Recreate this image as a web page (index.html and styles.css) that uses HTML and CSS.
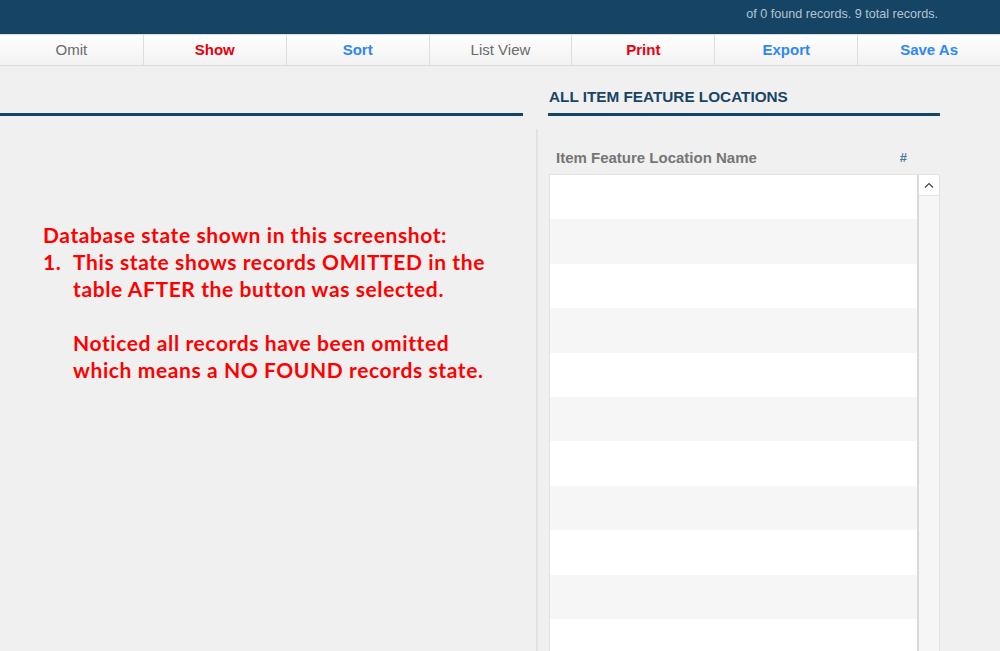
FILE: index.html
```html
<!DOCTYPE html>
<html>
<head>
<meta charset="utf-8">
<link rel="stylesheet" href="styles.css">
</head>
<body>
<header class="topbar"><span class="count">of 0 found records. 9 total records.</span></header>
<nav class="toolbar">
  <div class="tb gray">Omit</div>
  <div class="tb red">Show</div>
  <div class="tb blue">Sort</div>
  <div class="tb gray">List View</div>
  <div class="tb red">Print</div>
  <div class="tb blue">Export</div>
  <div class="tb blue">Save As</div>
</nav>
<main class="main">
  <section class="left">
    <div class="left-head"></div>
    <div class="note">
      <p>Database state shown in this screenshot:</p>
      <div class="item"><span class="num">1.</span><div class="item-text"><p>This state shows records OMITTED in the table AFTER the button was selected.</p><p class="gap">Noticed all records have been omitted which means a NO FOUND records state.</p></div></div>
    </div>
  </section>
  <section class="right">
    <div class="right-head"><h2>ALL ITEM FEATURE LOCATIONS</h2></div>
    <div class="right-body">
      <div class="col-head"><span class="col-name">Item Feature Location Name</span><span class="col-hash">#</span></div>
      <div class="table">
        <div class="rows">
          <div class="row"></div><div class="row alt"></div><div class="row"></div><div class="row alt"></div><div class="row"></div><div class="row alt"></div><div class="row"></div><div class="row alt"></div><div class="row"></div><div class="row alt"></div><div class="row"></div>
        </div>
        <div class="scroll">
          <div class="up"><svg width="10" height="6" viewBox="0 0 10 6"><path d="M1 5.5 L5 1.5 L9 5.5" fill="none" stroke="#444" stroke-width="1.2"/></svg></div>
        </div>
      </div>
    </div>
  </section>
</main>
</body>
</html>
```
FILE: styles.css
```css
* { box-sizing: border-box; }
html, body { margin: 0; padding: 0; }
body {
  width: 1000px;
  height: 651px;
  overflow: hidden;
  background: #f0f0f0;
  font-family: "Liberation Sans", Arial, sans-serif;
}
.topbar {
  height: 34px;
  background: #164464;
  display: flex;
  justify-content: flex-end;
  align-items: center;
  padding: 0 62px 7px 0;
}
.count { color: #b3c4d3; font-size: 12.6px; }
.toolbar {
  display: grid;
  grid-template-columns: repeat(7, 1fr);
  height: 32px;
  border-top: 1px solid #d6dde3;
  border-bottom: 1px solid #dcdcdc;
  background: linear-gradient(#ffffff, #f2f2f2);
}
.tb {
  display: flex;
  align-items: center;
  justify-content: center;
  font-size: 15px;
  border-left: 1px solid #dedede;
  padding-bottom: 1px;
}
.tb:first-child { border-left: none; }
.gray { color: #6a6a6a; }
.red { color: #e8000b; font-weight: bold; }
.blue { color: #2f87f5; font-weight: bold; }
.main { display: flex; }
.left { width: 523px; }
.left-head { height: 50px; border-bottom: 3px solid #164464; }
.note {
  margin-top: 105px;
  padding-left: 43px;
  font-family: Lato, "Open Sans", sans-serif;
  font-weight: bold;
  font-size: 21px;
  line-height: 27px;
  letter-spacing: 0.6px;
  color: #ff0000;
}
.note p { margin: 0; }
.item { display: flex; }
.num { width: 30px; flex: none; }
.item-text { width: 420px; }
.note .gap { margin-top: 27px; }
.right { margin-left: 13px; width: 404px; }
.right-head {
  height: 50px;
  margin-left: 12px;
  border-bottom: 3px solid #164464;
  display: flex;
  align-items: center;
  padding-top: 14px;
}
.right-head h2 {
  margin: 0 0 0 1px;
  font-size: 15.3px;
  font-weight: bold;
  color: #1a4466;
}
.right-body {
  margin-top: 13px;
  border-left: 2px solid #e2e2e2;
  padding-left: 11px;
  height: 522px;
}
.col-head {
  display: flex;
  justify-content: space-between;
  align-items: center;
  height: 45px;
  padding: 11px 33px 0 7px;
  font-size: 15px;
  font-weight: bold;
}
.col-name { color: #767676; }
.col-hash { color: #4a79a3; font-size: 13px; }
.table {
  display: flex;
  width: 391px;
  border: 1px solid #e2e2e2;
  border-bottom: none;
  border-radius: 0 4px 0 0;
  background: #fff;
  height: 477px;
  overflow: hidden;
}
.rows { flex: 1; overflow: hidden; }
.row { height: 44.4px; background: #ffffff; }
.row.alt { background: #f6f6f6; }
.scroll {
  width: 22px;
  border-left: 2px solid #dadada;
  background: #f6f6f6;
}
.up {
  height: 21px;
  background: #fff;
  border-bottom: 1px solid #e4e4e4;
  display: flex;
  align-items: center;
  justify-content: center;
}
```
